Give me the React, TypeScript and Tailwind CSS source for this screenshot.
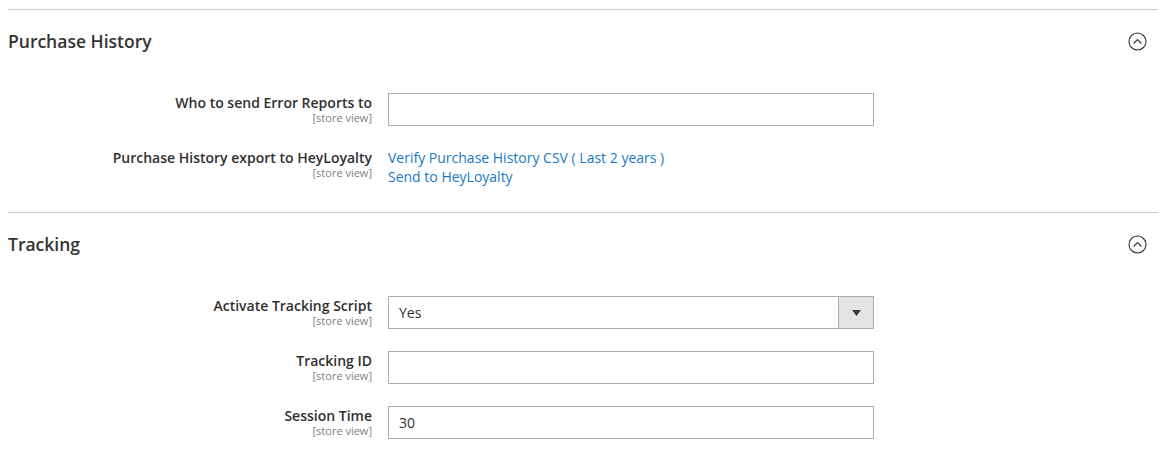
const sans = { fontFamily: '"Open Sans", "Noto Sans", sans-serif' };

function CollapseIcon() {
  return (
    <svg width="19" height="19" viewBox="0 0 19 19" fill="none" className="mr-[11px]">
      <circle cx="9.5" cy="9.5" r="8.5" stroke="#333333" strokeWidth="1.1" />
      <path d="M6 11 L9.5 7.6 L13 11" stroke="#333333" strokeWidth="1.2" strokeLinecap="round" strokeLinejoin="round" />
    </svg>
  );
}

function Label({ text }: { text: string }) {
  return (
    <div className="pr-4 text-right">
      <div className="pt-px text-[14px] font-semibold leading-[18px] text-[#303030]">{text}</div>
      <div className="text-[11px] leading-[12px] text-[#808080]">[store view]</div>
    </div>
  );
}

function TextInput({ value }: { value?: string }) {
  return (
    <div className="flex h-[33px] w-[486px] items-center border border-[#adadad] bg-white px-[10px] text-[14px] text-[#303030]">
      {value}
    </div>
  );
}

function SelectInput({ value }: { value: string }) {
  return (
    <div className="flex h-[33px] w-[486px] border border-[#adadad] bg-white text-[14px] text-[#303030]">
      <div className="flex flex-1 items-center px-[10px]">{value}</div>
      <div className="flex w-[35px] items-center justify-center border-l border-[#adadad] bg-[#e3e3e3]">
        <svg width="9" height="6" viewBox="0 0 9 6">
          <path d="M0 0 H9 L4.5 6 Z" fill="#41362f" />
        </svg>
      </div>
    </div>
  );
}

function Row({ label, children }: { label: string; children: React.ReactNode }) {
  return (
    <div className="grid grid-cols-[380px_486px]">
      <Label text={label} />
      <div>{children}</div>
    </div>
  );
}

function Section({ title, children }: { title: string; children: React.ReactNode }) {
  return (
    <section className="border-t border-[#cccccc]">
      <div className="flex h-[62px] items-center justify-between">
        <h2 className="text-[17.5px] font-semibold leading-[24px] text-[#333333]">{title}</h2>
        <CollapseIcon />
      </div>
      <div className="flex flex-col gap-[22px] pt-[21px] pb-[26px]">{children}</div>
    </section>
  );
}

export default function App() {
  return (
    <div className="min-h-[475px] bg-white px-2 pt-[9px]" style={sans}>
      <Section title="Purchase History">
        <Row label="Who to send Error Reports to">
          <TextInput />
        </Row>
        <Row label="Purchase History export to HeyLoyalty">
          <div className="flex flex-col items-start text-[14px] leading-[19px] text-[#1979c3]">
            <a href="#">Verify Purchase History CSV ( Last 2 years )</a>
            <a href="#">Send to HeyLoyalty</a>
          </div>
        </Row>
      </Section>
      <Section title="Tracking">
        <Row label="Activate Tracking Script">
          <SelectInput value="Yes" />
        </Row>
        <Row label="Tracking ID">
          <TextInput />
        </Row>
        <Row label="Session Time">
          <TextInput value="30" />
        </Row>
      </Section>
    </div>
  );
}
